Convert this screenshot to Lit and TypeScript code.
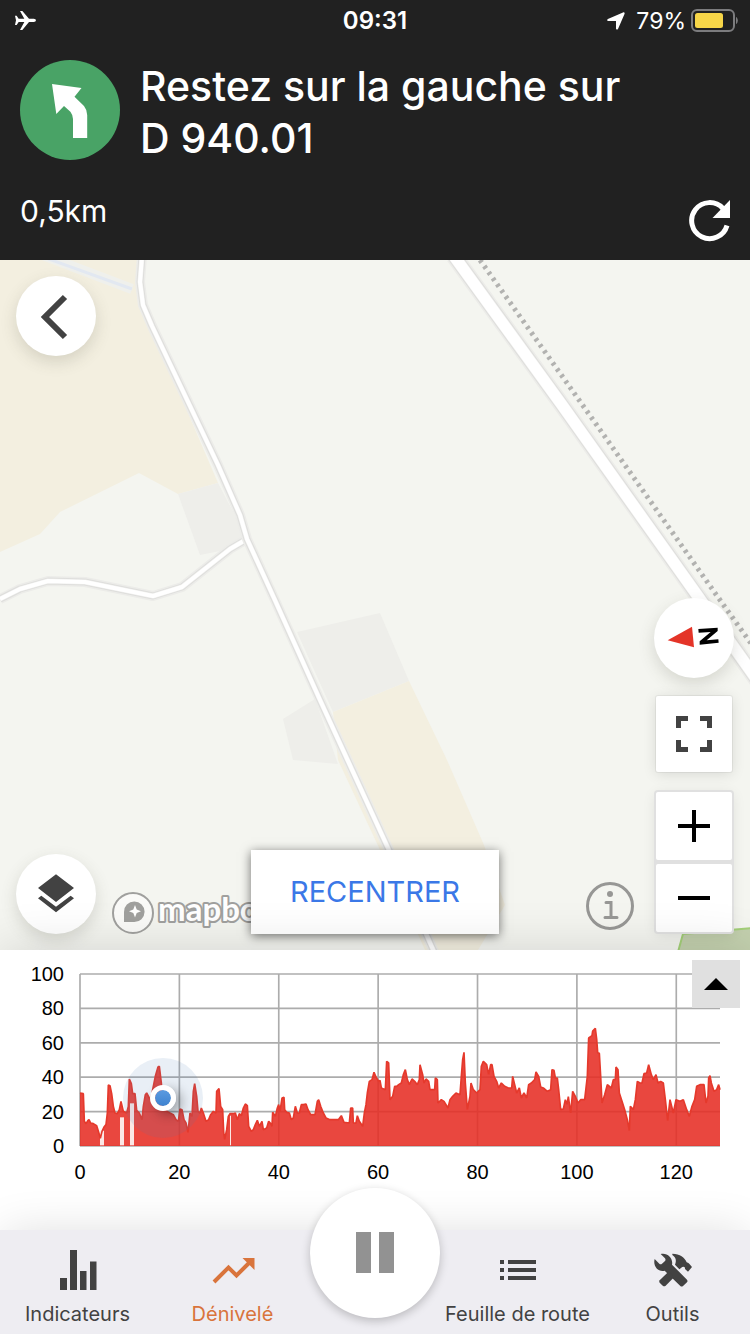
import { LitElement, html, css, svg } from "lit";
import { customElement } from "lit/decorators.js";

/* The plot uses three drawing units per pixel: 1920 wide, 516 high. */
const PLOT_W = 1920;
const PLOT_H = 516;
const MAX_KM = 128.8;
const MAX_M = 100;

/* Elevation profile in three legs; each leg has its own origin on the x axis
   and lists "x,height" pairs in drawing units. */
const LEGS: Array<{ start: number; points: string }> = [
  {
    start: 0,
    points:
      "0,159 10,157 13,74 18,67 24,77 27,79 32,69 40,67 50,61 56,41 61,23 66,44 72,57 78,64 82,99 85,183 90,181 95,157 100,119 105,99 112,97 118,109 123,134 130,104 140,99 145,119 148,201 154,187 158,157 165,157 170,107 178,99 186,79 190,119 196,154 200,159 208,144 212,139 220,179 226,209 234,237 238,239 244,189 250,109 260,104 270,99 280,94 288,79 295,74 300,111 306,109 312,79 318,69 324,41 330,99 336,89 340,164 344,187 350,149 354,104 360,99 364,114 370,99 378,74 386,79 392,94 400,104 408,99 410,164 417,172 422,119 428,109 431,42 434,20 440,49 445,89 450,97 460,97 466,99 472,79 478,97 484,91 490,114 496,126 502,121 506,59 514,44 520,49 526,64 532,77 538,59",
  },
  {
    start: 480,
    points:
      "66,74 70,49 80,54 86,74 92,67 96,59 98,101 106,89 112,114 116,124 120,104 126,144 132,146 134,109 140,101 148,99 154,79 160,84 166,119 172,99 178,99 184,124 190,124 198,126 204,109 212,94 225,94 232,134 236,139 242,119 250,99 258,84 270,79 295,79 304,91 312,71 328,69 332,114 338,114 340,69 348,69 352,91 358,74 368,59 373,99 378,124 382,159 388,194 396,199 402,221 408,207 416,194 420,197 424,174 436,169 440,254 446,249 450,139 458,149 464,179 470,179 476,184 484,189 490,214 496,229 502,199 508,184 516,201 524,194 532,184 538,199 540,244 548,214 552,189 558,201 566,194 570,169 584,169 586,204 592,199 594,129 604,139 612,134 624,114 630,139 638,149 648,159 660,154 664,209 668,259 672,281 676,189 682,109 690,149 693,189 700,169 710,159 720,169 724,239 730,254 740,244 746,214 752,244",
  },
  {
    start: 1230,
    points:
      "6,244 12,209 20,194 26,174 34,189 44,179 55,174 65,174 68,209 74,184 80,159 88,174 94,144 102,159 110,144 116,184 124,189 134,199 138,222 146,209 152,177 160,174 172,164 182,169 186,229 192,227 196,204 202,204 206,169 212,109 220,111 226,139 231,125 235,148 242,99 248,164 256,149 264,129 272,139 284,139 292,209 296,324 306,331 308,345 316,353 320,321 323,280 328,278 332,209 336,129 344,154 352,184 364,174 370,199 376,199 378,237 384,229 388,159 396,134 404,109 412,79 418,46 421,119 430,109 436,139 442,194 450,189 456,189 462,217 470,219 476,244 484,214 490,199 498,214 504,189 512,194 520,189 526,139 533,76 540,139 550,99 558,139 570,134 580,139 590,109 598,89 606,119 614,139 620,179 630,184 642,184 648,129 654,149 656,204 660,211 664,189 672,164 680,169 686,184 690,169",
  },
];

const SAMPLES: Array<[number, number]> = LEGS.flatMap(({ start, points }) =>
  points.split(" ").map((pair): [number, number] => {
    const [x, h] = pair.split(",").map(Number);
    return [start + x, PLOT_H - h];
  })
);
const RIDGE = SAMPLES.map(([x, y]) => `${x},${y}`).join(" L");

const GAPS = [
  [60, 12, 470],
  [120, 12, 430],
  [150, 12, 388],
  [450, 3, 425],
];

const KM_TICKS = [0, 20, 40, 60, 80, 100, 120];
const M_TICKS = [100, 80, 60, 40, 20, 0];
const POSITION = { km: 16.8, m: 28 };

@customElement("nav-header")
export class NavHeader extends LitElement {
  static styles = css`
    :host {
      display: block;
      background: #212121;
      color: #fff;
      font-family: Inter, "Liberation Sans", sans-serif;
    }
    svg { display: block; }
    .status {
      display: grid;
      grid-template-columns: 1fr auto 1fr;
      align-items: center;
      height: 42px;
      padding: 0 12px;
      font-size: 23px;
      line-height: 28px;
    }
    .time { font-weight: 600; font-size: 24px; }
    .right { display: flex; justify-content: flex-end; align-items: center; gap: 5px; }
    .pointer { margin-right: 6px; }
    .step {
      display: flex;
      align-items: flex-start;
      gap: 20px;
      padding: 18px 20px 0;
    }
    .step svg { flex: none; }
    h1 {
      margin: 0;
      font-size: 41px;
      line-height: 52px;
      font-weight: 500;
      max-width: 520px;
    }
    .foot {
      display: flex;
      justify-content: space-between;
      align-items: flex-start;
      padding: 28px 18px 18px 20px;
    }
    .distance { font-size: 30px; line-height: 38px; }
    button {
      display: block;
      margin: 6px 0 0;
      padding: 0;
      border: 0;
      background: none;
      color: inherit;
    }
  `;

  render() {
    return html`
      <div class="status">
        <svg width="24" height="22" viewBox="36 30 72 66" role="img" aria-label="Mode avion">
          <path fill="#fff" d="M45 47h5l6 9h17L60 33h7l20 23h14c9 0 9 10 0 10H87L67 90h-7l13-24H56l-6 9h-5l3-14z" />
        </svg>
        <span class="time">09:31</span>
        <div class="right">
          <svg class="pointer" width="18" height="18" viewBox="0 0 18 18" aria-hidden="true">
            <path fill="#fff" d="M16 .4c1.200-.5 2 .3 1.500 1.500L11 16.900c-.5 1.100-2 .9-2-.3V9H1.400C.1 9-.2 7.500.9 7z" />
          </svg>
          <span>79%</span>
          <svg width="47" height="24" viewBox="0 0 47 24" role="img" aria-label="Batterie">
            <rect x="1" y="1" width="42" height="21" rx="5" fill="none" stroke="#7c7c7e" stroke-width="2" />
            <rect x="4" y="4" width="28" height="15" rx="2.500" fill="#f7d648" />
            <path d="M45 8c2.400 1 2.400 6 0 7z" fill="#7c7c7e" />
          </svg>
        </div>
      </div>
      <div class="step">
        <svg width="100" height="100" viewBox="0 0 100 100" aria-hidden="true">
          <circle cx="50" cy="50" r="50" fill="#49a366" />
          <path fill="#fff" d="M32 24l29.500 4-7 8.700 9.500 9.300q3.200 4 3.200 9v23H53V59q0-4-2.600-7.300L44 46l-7.700 8z" />
        </svg>
        <h1>Restez sur la gauche sur D&nbsp;940.01</h1>
      </div>
      <div class="foot">
        <span class="distance">0,5km</span>
        <button aria-label="Recalculer">
          <svg width="44" height="44" viewBox="0 0 44 44" aria-hidden="true">
            <path d="M35 10.500A18 18 0 1 0 39 27.500" fill="none" stroke="#fff" stroke-width="5" />
            <path fill="#fff" d="M42 2v18H24.500z" />
          </svg>
        </button>
      </div>
    `;
  }
}

@customElement("route-map")
export class RouteMap extends LitElement {
  static styles = css`
    :host {
      display: block;
      position: relative;
      overflow: hidden;
      background: #f4f5f0;
      font-family: Inter, "Liberation Sans", sans-serif;
    }
    svg { display: block; }
    .tiles { position: absolute; inset: 0; width: 100%; height: 100%; }
    button { border: 0; margin: 0; padding: 0; background: #fff; color: #424242; }
    .round {
      display: grid;
      place-items: center;
      width: 80px;
      height: 80px;
      border-radius: 50%;
      box-shadow: 0 6px 16px rgba(80, 80, 60, 0.18);
    }
    .back { position: absolute; left: 16px; top: 16px; }
    .corner {
      position: absolute;
      left: 16px;
      bottom: 16px;
      display: flex;
      align-items: flex-end;
      gap: 16px;
    }
    .brand { display: flex; align-items: center; gap: 4px; text-decoration: none; }
    .wordmark { overflow: visible; font-family: Lato, sans-serif; font-weight: 700; font-size: 33px; }
    .recenter {
      position: absolute;
      left: 50%;
      bottom: 16px;
      transform: translateX(-50%);
      padding: 24px 39px;
      font: 400 29px/36px Inter, "Liberation Sans", sans-serif;
      color: #3b78e7;
      white-space: nowrap;
      box-shadow: 0 2px 10px rgba(0, 0, 0, 0.55);
    }
    .side {
      position: absolute;
      right: 16px;
      bottom: 18px;
      display: flex;
      align-items: flex-end;
      gap: 20px;
    }
    .info {
      width: 48px;
      height: 48px;
      margin-bottom: 2px;
      border-radius: 50%;
      background: none;
    }
    .stack { display: flex; flex-direction: column; align-items: center; gap: 18px; }
    .square {
      display: grid;
      place-items: center;
      width: 76px;
      height: 76px;
      border-radius: 2px;
      box-shadow: 0 0 0 1px rgba(0, 0, 0, 0.05), 0 2px 14px rgba(0, 0, 0, 0.12);
    }
    .zoom {
      display: flex;
      flex-direction: column;
      gap: 4px;
      margin-top: 2px;
      background: #e0e0e0;
      border-radius: 2px;
      box-shadow: 0 0 0 2px #e0e0e0, 0 2px 14px rgba(0, 0, 0, 0.1);
    }
    .zoom button {
      display: grid;
      place-items: center;
      width: 76px;
      height: 68px;
      border-radius: 2px;
      color: #000;
    }
  `;

  private road(d: string, casing: number, width: number) {
    return svg`
      <path d=${d} fill="none" stroke="#ecece9" stroke-width=${casing + 3} stroke-linejoin="round" />
      <path d=${d} fill="none" stroke="#dededc" stroke-width=${casing} stroke-linejoin="round" />
      <path d=${d} fill="none" stroke="#f0f0ee" stroke-width=${width + 1} stroke-linejoin="round" />
      <path d=${d} fill="none" stroke="#ffffff" stroke-width=${width} stroke-linejoin="round" />
    `;
  }

  render() {
    return html`
      <svg class="tiles" viewBox="0 0 750 690" preserveAspectRatio="xMidYMid slice" aria-hidden="true">
        <path fill="#f3efe0" d="M0 0H138L136 22L143 48L218 223L178 234L139 213L60 252L40 274L0 292Z" />
        <path fill="none" stroke="#eff0ec" stroke-width="10" d="M40-6L132 29" />
        <path fill="none" stroke="#e2e8f1" stroke-width="3" d="M46-2L132 29" />
        <path fill="#eeeeea" d="M178 234L218 223L247 278L230 289L200 295Z" />
        <path fill="#eeeeea" d="M297 372L380 353L409 421L333 452ZM283 459L315 439L338 504L293 500Z" />
        <path fill="#f3efe0" d="M409 421L333 452L338 500L380 590L425 690H478L505 645L484 585L447 500Z" />
        <path fill="#c3d0ae" stroke="#a4d079" stroke-width="2" d="M678 692L683 674L752 668V692Z" />
        ${this.road("M0 339L20 329L48 321L85 322L153 336L182 327L230 289L247 279", 7, 4)}
        ${this.road("M142-4L140 22L143 45L152 66L218 205L240 255L247 279L274 338L320 440L388 588L435 694", 7, 4)}
        ${this.road("M454-4L562 145L697 335L762 427", 14, 11)}
        <path fill="none" stroke="#b2b2b0" stroke-width="5" stroke-dasharray="3 4.400" d="M480 0L596 164L715 333L760 396" />
      </svg>

      <button class="round back" aria-label="Retour">
        <svg width="44" height="48" viewBox="0 0 44 48" aria-hidden="true">
          <path d="M31 5L11 25L31 45" fill="none" stroke="#424242" stroke-width="6" />
        </svg>
      </button>

      <div class="corner">
        <button class="round" aria-label="Couches">
          <svg width="40" height="42" viewBox="108 818 120 126" aria-hidden="true">
            <path fill="#424242" d="M168 822L222 863L168 905L114 863ZM168 919L212 886L222 894L168 936L114 894L124 886Z" />
          </svg>
        </button>
        <a class="brand" href="#mapbox" aria-label="Mapbox">
          <svg width="42" height="42" viewBox="0 0 42 42" aria-hidden="true">
            <circle cx="21" cy="21" r="20" fill="#fafaf8" stroke="#a0a09e" stroke-width="2" />
            <path fill="#a0a09e" d="M12 30V20a10.300 10.300 0 1 1 10 10z" />
            <path fill="#fff" d="M23 13l1.700 4.600L29 19.200l-4.300 1.700L23 25.500l-1.700-4.600L17 19.200l4.300-1.600z" />
          </svg>
          <svg class="wordmark" width="112" height="42" viewBox="0 0 112 42">
            <text x="0" y="29" fill="#fff" stroke="#a0a09e" stroke-width="4" stroke-linejoin="round" paint-order="stroke">mapbox</text>
          </svg>
        </a>
      </div>

      <button class="recenter">RECENTRER</button>

      <div class="side">
        <button class="info" aria-label="Informations">
          <svg width="48" height="48" viewBox="0 0 48 48" fill="none" stroke="#979795" aria-hidden="true">
            <circle cx="24" cy="24" r="22.500" stroke-width="3" />
            <circle cx="24" cy="12" r="3" fill="#979795" stroke="none" />
            <path d="M20 20.500H25V35.500M19 35.500H31" stroke-width="3" stroke-linecap="round" />
          </svg>
        </button>
        <div class="stack">
          <button class="round" aria-label="Nord">
            <svg width="60" height="40" viewBox="492 84 180 120" aria-hidden="true">
              <path fill="#e43428" d="M503 151L576 110L582 172Z" />
              <path fill="#000" d="M595 117L653 113V123L620 151L655 148L656 158L599 164V154L632 126L596 128Z" />
            </svg>
          </button>
          <button class="square" aria-label="Plein écran">
            <svg width="36" height="36" viewBox="0 0 36 36" aria-hidden="true">
              <path d="M2.500 12V2.500H12M24 2.500H33.500V12M33.500 24V33.500H24M12 33.500H2.500V24" fill="none" stroke="#424242" stroke-width="5" />
            </svg>
          </button>
          <div class="zoom">
            <button aria-label="Zoom avant">
              <svg width="32" height="32" viewBox="0 0 32 32" aria-hidden="true">
                <path d="M0 16H32M16 0V32" stroke="#000" stroke-width="4" />
              </svg>
            </button>
            <button aria-label="Zoom arrière">
              <svg width="32" height="32" viewBox="0 0 32 32" aria-hidden="true">
                <path d="M0 16H32" stroke="#000" stroke-width="4" />
              </svg>
            </button>
          </div>
        </div>
      </div>
    `;
  }
}

@customElement("elevation-chart")
export class ElevationChart extends LitElement {
  static styles = css`
    :host {
      display: block;
      position: relative;
      box-sizing: border-box;
      padding: 13px 30px 47px 0;
      background: #fff;
      color: #000;
      box-shadow: 0 0 48px rgba(0, 0, 0, 0.14);
      font: 20px/22px "Liberation Sans", Arial, sans-serif;
    }
    .chart { display: grid; grid-template-columns: 64px 1fr; column-gap: 16px; }
    .meters {
      display: flex;
      flex-direction: column;
      justify-content: space-between;
      height: 194px;
      text-align: right;
    }
    .plot { position: relative; margin: 11px 0; }
    .plot svg { display: block; width: 100%; height: 172px; overflow: visible; }
    .halo {
      position: absolute;
      display: grid;
      place-items: center;
      width: 80px;
      height: 80px;
      transform: translate(-50%, -50%);
      border-radius: 50%;
      background: rgba(70, 120, 180, 0.12);
    }
    .dot {
      width: 16px;
      height: 16px;
      border: 5px solid #fff;
      border-radius: 50%;
      background: linear-gradient(#5b9ae0, #3f83d0);
      background-clip: padding-box;
      box-shadow: 6px 4px 12px rgba(0, 0, 0, 0.3);
    }
    .kms { grid-column: 2; display: flex; margin-top: 4px; }
    .kms span { flex: 20 1 0; min-width: 0; }
    .kms span:last-child { flex-grow: 8.8; }
    .kms b { display: flex; justify-content: center; width: 0; font-weight: 400; }
    .expand {
      position: absolute;
      top: 10px;
      right: 10px;
      display: grid;
      place-items: center;
      width: 48px;
      height: 48px;
      padding: 0;
      border: 0;
      background: #e0e0e0;
    }
  `;

  render() {
    return html`
      <div class="chart">
        <div class="meters">${M_TICKS.map((m) => html`<span>${m}</span>`)}</div>
        <div class="plot">
          <svg viewBox="0 0 ${PLOT_W} ${PLOT_H}" preserveAspectRatio="none" role="img" aria-label="Profil altimétrique">
            <g stroke="#acacac" stroke-width="5">
              ${M_TICKS.map((m) => {
                const y = PLOT_H * (1 - m / MAX_M);
                return svg`<path d="M0 ${y}H${PLOT_W}" />`;
              })}
              ${KM_TICKS.map((km) => {
                const x = (PLOT_W * km) / MAX_KM;
                return svg`<path d="M${x} 0V${PLOT_H}" />`;
              })}
            </g>
            <path fill="#e62e24" fill-opacity="0.88" d="M0 ${PLOT_H} L${RIDGE} V${PLOT_H}Z" />
            ${GAPS.map(([x, w, y]) => svg`<path fill="#fbe8e6" d="M${x} ${y}h${w}V${PLOT_H - 2}h${-w}Z" />`)}
            <path fill="none" stroke="#e5392c" stroke-width="5" stroke-linejoin="bevel" d="M${RIDGE}" />
          </svg>
          <div class="halo" style="left:${(POSITION.km / MAX_KM) * 100}%;top:${MAX_M - POSITION.m}%">
            <span class="dot"></span>
          </div>
        </div>
        <div class="kms">${KM_TICKS.map((km) => html`<span><b>${km}</b></span>`)}</div>
      </div>
      <button class="expand" aria-label="Agrandir le graphique">
        <svg width="24" height="12" viewBox="0 0 24 12" aria-hidden="true"><path d="M0 12L12 0L24 12Z" /></svg>
      </button>
    `;
  }
}

const TABS = [
  {
    label: "Indicateurs",
    active: false,
    view: "0 0 48 48",
    art: svg`<path fill="#424242" d="M6 32h7v12H6zM16 4h7v40h-7zM26 25h6.500v19H26zM36 15.500h6.500V44H36z" />`,
  },
  {
    label: "Dénivelé",
    active: true,
    view: "0 0 48 48",
    art: svg`<path fill="none" stroke="#d9743c" stroke-width="4" d="M5 36L19.500 21.500L27.500 29.500L42 15" />
      <path fill="#d9743c" d="M33.500 12H45.500V24Z" />`,
  },
  {
    label: "Feuille de route",
    active: false,
    view: "0 0 48 48",
    art: svg`<path fill="#424242" d="M6 14h4v4H6zM14 14h28v4H14zM6 22h4v4H6zM14 22h28v4H14zM6 30h4v4H6zM14 30h28v4H14z" />`,
  },
  {
    label: "Outils",
    active: false,
    view: "821 198 144 144",
    art: svg`<g fill="#424242">
      <path d="M856 222C876 217 894 234 890 254L935 299Q938 303 935 307L923 318Q919 321 915 318L868 272C849 277 832 259 838 237L852 251Q856 254 860 251L869 243Q872 239 869 235Z" />
      <path d="M891 221C914 221 928 232 934 247Q940 248 943 253L950 261L938 275L929 267C930 260 923 258 917 264L912 268L899 254C904 242 902 232 891 225Z" />
      <path d="M881 274L853 301Q850 305 853 308L863 318Q867 320 871 317L896 292Z" />
    </g>`,
  },
];

@customElement("tab-bar")
export class TabBar extends LitElement {
  static styles = css`
    :host {
      display: block;
      position: relative;
      background: #eeedf2;
      box-shadow: 0 0 48px -4px rgba(0, 0, 0, 0.14);
      font-family: Inter, "Liberation Sans", sans-serif;
    }
    nav { display: flex; height: 104px; }
    a {
      flex: 1 1 0;
      display: flex;
      flex-direction: column;
      align-items: center;
      gap: 8px;
      padding-top: 16px;
      color: #424242;
      font-size: 20px;
      line-height: 24px;
      text-decoration: none;
      white-space: nowrap;
    }
    a.active { color: #d9743c; }
    svg { display: block; }
    .pause {
      flex: none;
      display: grid;
      place-items: center;
      width: 130px;
      height: 130px;
      margin-top: -42px;
      padding: 0;
      border: 0;
      border-radius: 50%;
      background: #fff;
      box-shadow: 0 3px 10px rgba(0, 0, 0, 0.22);
    }
  `;

  private tab(t: (typeof TABS)[number]) {
    return html`
      <a href="#${t.label}" class=${t.active ? "active" : ""}>
        <svg width="48" height="48" viewBox=${t.view} aria-hidden="true">${t.art}</svg>
        <span>${t.label}</span>
      </a>
    `;
  }

  render() {
    return html`
      <nav>
        ${TABS.slice(0, 2).map((t) => this.tab(t))}
        <button class="pause" aria-label="Pause">
          <svg width="38" height="42" viewBox="0 0 38 42" aria-hidden="true">
            <path fill="#929292" d="M0 0h15v41H0zM23 0h15v41H23z" />
          </svg>
        </button>
        ${TABS.slice(2).map((t) => this.tab(t))}
      </nav>
    `;
  }
}

@customElement("app-root")
export class AppRoot extends LitElement {
  static styles = css`
    :host { display: flex; flex-direction: column; min-height: 100vh; background: #fff; }
    route-map { flex: 1 0 480px; }
  `;

  render() {
    return html`
      <nav-header></nav-header>
      <route-map></route-map>
      <elevation-chart></elevation-chart>
      <tab-bar></tab-bar>
    `;
  }
}
